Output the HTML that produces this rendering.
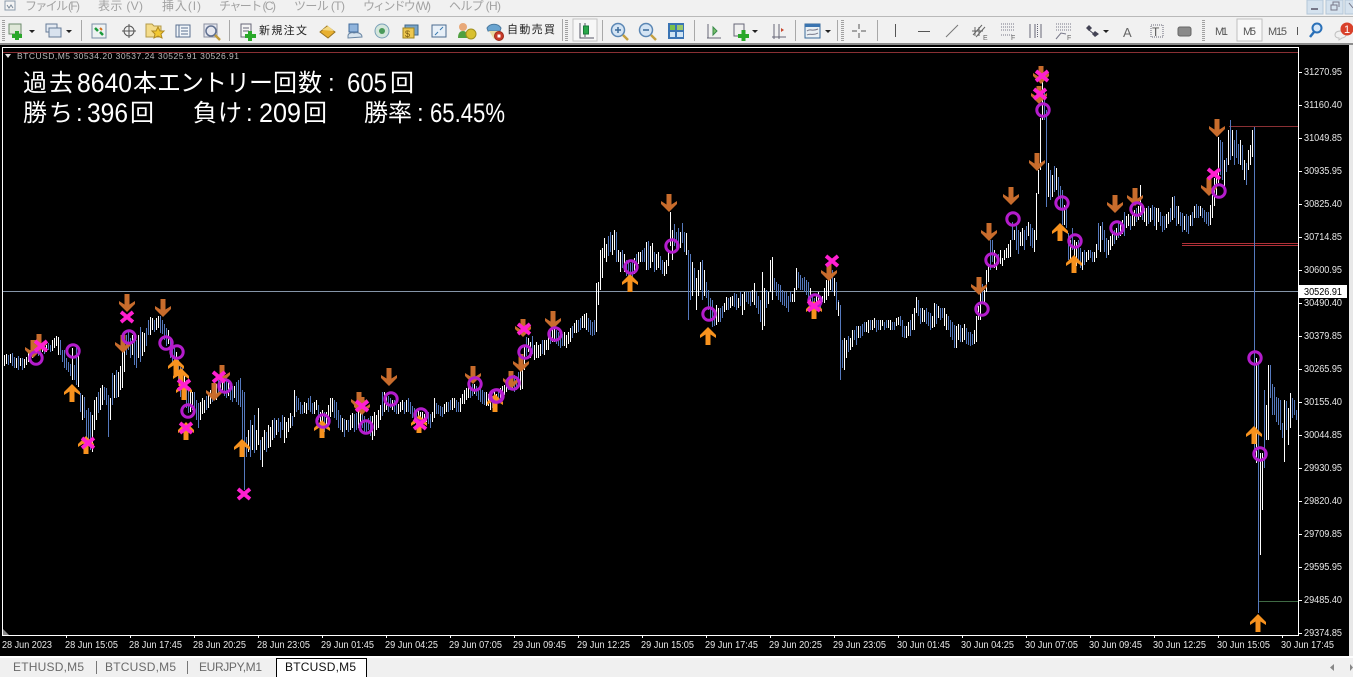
<!DOCTYPE html>
<html lang="ja"><head><meta charset="utf-8"><title>BTCUSD,M5</title>
<style>
html,body{margin:0;padding:0;background:#000;width:1353px;height:677px;overflow:hidden}
svg{display:block}
text{font-family:"Liberation Sans","Noto Sans CJK JP",sans-serif}
.m{font-size:12px;fill:#a2a2a2}
.t{font-size:11px;fill:#222}
.y{font-size:10px;fill:#e8e8e8}
.x{font-size:10px;fill:#e8e8e8}
.big{font-size:24px;fill:#fff}
.dg{font-size:27px;fill:#fff}
.tab{font-size:12px;fill:#6a6a6a}
.w{stroke:#fff;fill:none}
.b{stroke:#5579bd;fill:none}
.dn{fill:#c86c2c}.up{fill:#f7921e}
.xx{stroke:#ff1fd0;stroke-width:3.800;fill:none}
.ci{stroke:#b41ccc;stroke-width:3;fill:none}
</style></head><body>
<svg width="1353" height="677" viewBox="0 0 1353 677" xmlns="http://www.w3.org/2000/svg">
<defs>
<path id="d" d="M-2.500-9H2.500V1.500L8-2V1L0 9-8 1V-2L-2.500 1.500Z"/>
<path id="u" d="M-2.500 9H2.500V-1.500L8 2V-1L0-9-8-1V2L-2.500-1.500Z"/>
<path id="k" d="M-6-5L6 5M6-5L-6 5"/>
<circle id="o" r="6.200"/>
</defs>
<rect width="1353" height="677" fill="#000"/>
<!-- top bars -->
<rect width="1353" height="44" fill="#f1f1f1"/>
<rect y="16" width="1353" height="1" fill="#b9b9b9"/>
<rect y="43" width="1353" height="2" fill="#8c8c8c"/>
<path d="M5 1H15V10H5Z" fill="#f4f4f4" stroke="#8a9aaa"/><path d="M7 5l2 3 2-3 2 3" fill="none" stroke="#7a8a9a"/>
<text class="m" x="25" y="10" textLength="55">ファイル (F)</text>
<text class="m" x="98" y="10" textLength="45">表示 (V)</text>
<text class="m" x="162" y="10" textLength="39">挿入(I)</text>
<text class="m" x="219" y="10" textLength="57">チャート (C)</text>
<text class="m" x="294" y="10" textLength="51">ツール (T)</text>
<text class="m" x="363" y="10" textLength="68">ウィンドウ (W)</text>
<text class="m" x="449" y="10" textLength="52">ヘルプ (H)</text>
<!-- window buttons -->
<rect x="1307" y="0" width="16" height="14" fill="#d5e2ee" stroke="#b4c6d8"/><rect x="1326" y="0" width="17" height="14" fill="#d5e2ee" stroke="#b4c6d8"/><rect x="1345" y="0" width="9" height="14" fill="#d5e2ee" stroke="#b4c6d8"/>
<path d="M1311 9h7" stroke="#778" stroke-width="2"/><path d="M1331 5h6v5h-6zM1333 5V2h6v5" fill="none" stroke="#778"/><path d="M1349 3l4 5" stroke="#778"/>
<!-- separators / grips -->
<path d="M81.500 20V41M229.500 20V41M562.500 19V41M602.500 20V41M694.500 20V41M795.500 20V41M837.500 20V41M877.500 20V41" stroke="#a8a8a8"/>
<path d="M3.500 20V41M566.500 20V41M842.500 20V41M1203.500 20V41" stroke="#a0a0a0" stroke-dasharray="1 1" stroke-width="3"/>
<!-- icons row -->
<rect x="9" y="24" width="12" height="10" fill="#dfe8d8" stroke="#6c8a6c"/><path d="M12 36h10M17 31v9" stroke="#2aa82a" stroke-width="4"/>
<rect x="46" y="24" width="11" height="8" fill="#e4eaf2" stroke="#667c98"/><rect x="49" y="28" width="12" height="9" fill="#d8e2ee" stroke="#667c98"/>
<path d="M29 30h6l-3 3zM66 30h6l-3 3z" fill="#222"/>
<rect x="92" y="24" width="14" height="14" fill="#eef2f2" stroke="#7a8fa5"/><path d="M95 28l3 3M100 32l3 3" stroke="#1a9a3a" stroke-width="2.500"/><path d="M100 28l2 2" stroke="#d27020" stroke-width="2"/>
<circle cx="129" cy="31" r="5" fill="none" stroke="#555"/><path d="M122 31h14M129 24v14" stroke="#555"/>
<path d="M146 24h6l2 2h7v11h-15z" fill="#f4dc8a" stroke="#b49a4a"/><path d="M158 27l2 4 4 0-3 3 1 4-4-2-4 2 1-4-3-3 4 0z" fill="#f2c830" stroke="#b08a20"/>
<rect x="176" y="25" width="14" height="12" fill="#f2f6fa" stroke="#5a7090"/><path d="M179 25v12M181 28h7M181 31h7M181 34h7" stroke="#5a7090"/>
<rect x="204" y="24" width="13" height="13" fill="#e6e8f0" stroke="#8a90a0"/><circle cx="211" cy="31" r="5" fill="none" stroke="#607090" stroke-width="1.500"/><path d="M215 35l5 5" stroke="#c09a3a" stroke-width="2.500"/>
<rect x="241" y="24" width="10" height="13" fill="#f4f4f4" stroke="#667"/><path d="M243 28h6M243 31h6" stroke="#667"/><path d="M245 36h11M250 31v10" stroke="#2aa82a" stroke-width="4"/>
<text class="t" x="259" y="34" textLength="48">新規注文</text>
<path d="M320 32l7-6 8 6-7 6z" fill="#e8b030" stroke="#9a7420"/><path d="M322 30l6-4 6 5" fill="#f4d880"/>
<path d="M349 24h9v8h-9z" fill="#90b4dc" stroke="#406a9c"/><path d="M348 36c0-3 4-4 6-3 3-1 8 0 8 4l-14 1z" fill="#d8e4ee" stroke="#6a86a4"/>
<circle cx="382" cy="31" r="7" fill="#d4e6dc" stroke="#7aa0b8"/><circle cx="382" cy="31" r="3" fill="#4a9a5a"/>
<rect x="405" y="25" width="13" height="10" fill="#78a4c8" stroke="#40688c"/><rect x="403" y="28" width="11" height="10" fill="#eec850" stroke="#a08420"/><text x="405" y="37" font-size="9" fill="#7a5a10">$</text>
<rect x="432" y="25" width="14" height="12" fill="#e8f0f8" stroke="#4a6a90"/><path d="M435 35l3-3M443 27l-3 3" stroke="#3a7ab0"/>
<circle cx="463" cy="27" r="4" fill="#e8a878"/><path d="M458 38c0-5 2-7 5-7s4 2 4 7z" fill="#50a040"/><circle cx="471" cy="34" r="5" fill="#d8c030" stroke="#a09020"/>
<path d="M487 28c3-5 11-5 14 0l-1 3-12 0z" fill="#6aa4d0" stroke="#4a7aa0"/><path d="M489 31l5 8 5-4 0-4z" fill="#e8d8a0"/><circle cx="499" cy="36" r="4.500" fill="#c83a28" stroke="#9a2a1a"/><rect x="497.500" y="34.500" width="3" height="3" fill="#fff"/>
<text class="t" x="507" y="33" textLength="48">自動売買</text>
<rect x="573" y="19" width="24" height="22" fill="#f7f7f7" stroke="#c4c4c4"/><path d="M580 23v15h14M585 23v14" stroke="#556" fill="none"/><rect x="583.500" y="26" width="5" height="8" fill="#2aa84a" stroke="#1a7a3a"/>
<circle cx="618" cy="30" r="6.500" fill="#d4e4f4" stroke="#5a86b4" stroke-width="1.500"/><path d="M615 30h6M618 27v6" stroke="#3a6a9a" stroke-width="1.500"/><path d="M623 35l5 5" stroke="#c4a040" stroke-width="2.500"/>
<circle cx="646" cy="30" r="6.500" fill="#d4e4f4" stroke="#5a86b4" stroke-width="1.500"/><path d="M643 30h6" stroke="#3a6a9a" stroke-width="1.500"/><path d="M651 35l5 5" stroke="#c4a040" stroke-width="2.500"/>
<rect x="668" y="23" width="16" height="16" fill="#3a74b4"/><rect x="670" y="25" width="5" height="5" fill="#7ac04a"/><rect x="677" y="25" width="6" height="5" fill="#9ac86a"/><rect x="670" y="32" width="5" height="5" fill="#cfe4f4"/><rect x="677" y="32" width="6" height="5" fill="#cfe4f4"/>
<path d="M708 24v14h11M707 38h14" stroke="#667" fill="none"/><path d="M713 27l4 4-4 4z" fill="#7ac06a" stroke="#3a8a4a"/>
<rect x="734" y="24" width="10" height="12" fill="#f0f0f0" stroke="#667"/><path d="M738 36h11M743.500 30v11" stroke="#2aa82a" stroke-width="4"/><path d="M752 30h6l-3 3z" fill="#222"/>
<path d="M774 24v15M779 24v15M772 37h14" stroke="#667" fill="none"/><path d="M781 28l3 2-3 2z" fill="#c84a30"/>
<rect x="805" y="24" width="15" height="14" fill="#eaf0f4" stroke="#3a6a9a"/><rect x="805" y="24" width="15" height="3" fill="#3a74b0"/><path d="M807 31c3-3 5 1 11-2M807 35c3-2 6 1 11-2" stroke="#778" fill="none"/><path d="M825 30h6l-3 3z" fill="#222"/>
<path d="M852 31h5M861 31h5M859 24v5M859 33v5" stroke="#555"/>
<path d="M895.500 24v13M918 31.500h12" stroke="#555"/><path d="M946 37l12-12" stroke="#777"/>
<path d="M973 35l9-10M976 37l9-10M972 31h11M975 27v9M979 27v9" stroke="#666"/><text x="983" y="40" font-size="7" fill="#666">E</text>
<path d="M1001 24h13M1001 27h13M1001 30h13M1001 35h11" stroke="#778" stroke-dasharray="1 1"/><text x="1011" y="40" font-size="7" fill="#666">F</text>
<path d="M1030 24v14M1035 24v14M1041 24v14" stroke="#667"/><path d="M1037.500 24v14" stroke="#667" stroke-dasharray="1 1"/>
<path d="M1056 24h15M1056 27h15M1056 30h15" stroke="#778" stroke-dasharray="1 1"/><path d="M1056 39l5-6 5 1" stroke="#778" fill="none"/><text x="1067" y="40" font-size="7" fill="#666">F</text>
<path d="M1086 28l3-3 3 3-3 3zM1092 34l3-3 4 3-4 3z" fill="#445"/><path d="M1089 30l5 4" stroke="#445"/><path d="M1103 30h6l-3 3z" fill="#222"/>
<text x="1123" y="37" font-size="13" fill="#666">A</text>
<rect x="1151" y="25" width="12" height="12" fill="none" stroke="#667" stroke-dasharray="1 1"/><text x="1152" y="36" font-size="12" fill="#555">T</text>
<rect x="1178" y="27" width="13" height="9" rx="2" fill="#8a8a8a" stroke="#666"/>
<rect x="1237" y="19" width="25" height="22" fill="#f8f8f8" stroke="#c0c0c0"/>
<text class="t" x="1215" y="35" textLength="13" style="fill:#555">M1</text>
<text class="t" x="1243" y="35" textLength="13" style="fill:#555">M5</text>
<text class="t" x="1268" y="35" textLength="19" style="fill:#555">M15</text>
<path d="M1297.500 27v8" stroke="#555"/>
<circle cx="1317" cy="28" r="4.500" fill="#d8e8f8" stroke="#2a70b8" stroke-width="2"/><path d="M1314 32l-4 5" stroke="#2a70b8" stroke-width="2.500"/>
<path d="M1335 35c0-3 3-4 6-4s5 2 5 4-3 3-4 3l-3 2v-2c-2 0-4-1-4-3z" fill="#f0f0f0" stroke="#c0c0c0"/>
<circle cx="1347" cy="29" r="6.500" fill="#d8402a"/><text x="1344" y="33" font-size="11" fill="#fff">1</text>

<!-- chart frame -->
<path d="M2.500 47.500H1298.500V635.500H2.500Z" fill="none" stroke="#fff"/>
<path d="M3 52.500H1298" stroke="#8a3034"/>
<path d="M3 629v6h6z" fill="#888"/>
<path d="M5 54h6l-3 4z" fill="#ddd"/>
<text x="17" y="59" font-size="8.500" fill="#bbb" textLength="222">BTCUSD,M5  30534.20 30537.24 30525.91 30526.91</text>
<!-- level lines -->
<rect x="3" y="291" width="1295" height="1" fill="#8595a8"/>
<rect x="1229" y="126" width="69" height="1" fill="#8a3034"/>
<rect x="1182" y="243" width="116" height="1" fill="#b03038"/>
<rect x="1182" y="245" width="116" height="1" fill="#b03038"/>
<rect x="1259" y="601" width="39" height="1" fill="#3f6a44"/>
<!-- bars -->
<g transform="translate(.5 0)" stroke-width="1">
<path class="w" d="M2 353V370M4 355V366M6 354V364"/><path class="b" d="M8 355V365"/><path class="w" d="M10 354V363"/><path class="b" d="M12 353V366M14 357V368"/><path class="w" d="M16 358V368"/><path class="b" d="M18 356V370"/><path class="w" d="M20 358V366"/><path class="b" d="M22 358V370"/><path class="w" d="M24 359V368M26 357V365M28 352V362"/><path class="b" d="M30 350V360"/><path class="w" d="M32 345V358"/><path class="b" d="M34 343V355"/><path class="w" d="M36 345V352"/><path class="b" d="M38 346V356M40 348V354"/><path class="w" d="M42 346V352"/><path class="b" d="M44 344V354"/><path class="w" d="M46 345V352"/><path class="b" d="M48 343V350M50 345V352"/><path class="w" d="M52 340V351M54 338V348M56 336V346M58 337V355"/><path class="b" d="M60 340V355M62 350V362M64 350V368M66 358V370M68 362V372M70 364V376"/><path class="w" d="M72 348V380"/><path class="b" d="M74 365V380M76 346V385"/><path class="w" d="M78 347V387"/><path class="b" d="M80 393V412"/><path class="w" d="M82 395V420"/><path class="b" d="M84 397V418M86 410V437M88 408V440M90 412V450"/><path class="w" d="M92 415V452M94 400V430M96 397V420"/><path class="b" d="M98 392V413"/><path class="w" d="M100 388V410M102 385V405"/><path class="b" d="M104 387V400M106 388V405M108 395V437"/><path class="w" d="M110 398V420"/><path class="b" d="M112 373V405"/><path class="w" d="M114 375V398"/><path class="b" d="M116 370V398"/><path class="w" d="M118 372V397M120 366V390M122 352V388M124 345V372"/><path class="b" d="M126 335V355M128 332V350M130 338V358"/><path class="w" d="M132 335V355"/><path class="b" d="M134 340V365M136 340V368"/><path class="w" d="M138 335V358"/><path class="b" d="M140 327V362"/><path class="w" d="M142 332V356M144 333V352"/><path class="b" d="M146 328V346M148 320V335"/><path class="w" d="M150 317V335M152 318V330"/><path class="b" d="M154 320V332"/><path class="w" d="M156 318V330M158 316V328"/><path class="b" d="M160 316V333M162 320V334M164 324V340M166 328V346"/><path class="w" d="M168 330V344"/><path class="b" d="M170 340V358M172 344V365M174 348V370"/><path class="w" d="M176 352V368"/><path class="b" d="M178 360V382M180 367V397M182 368V392"/><path class="w" d="M184 372V390"/><path class="b" d="M186 380V408M188 388V413"/><path class="w" d="M190 390V412M192 392V410"/><path class="b" d="M194 392V414M196 400V420M198 403V428"/><path class="w" d="M200 402V420M202 398V414M204 400V413"/><path class="b" d="M206 396V410"/><path class="w" d="M208 392V408M210 390V404"/><path class="b" d="M212 392V402"/><path class="w" d="M214 388V400M216 384V400"/><path class="b" d="M218 380V396"/><path class="w" d="M220 378V394M222 376V392"/><path class="b" d="M224 378V396M226 380V398"/><path class="w" d="M228 382V396"/><path class="b" d="M230 382V400M232 386V402"/><path class="w" d="M234 386V398"/><path class="b" d="M236 382V402M238 380V405M240 378V407M242 390V440M244 392V490"/><path class="b" d="M246 437V457"/><path class="w" d="M248 430V452"/><path class="b" d="M250 420V457"/><path class="w" d="M252 425V450"/><path class="b" d="M254 415V453"/><path class="w" d="M256 430V450M258 408V445"/><path class="b" d="M260 440V460"/><path class="w" d="M262 437V467M264 430V450"/><path class="b" d="M266 432V452"/><path class="w" d="M268 425V448M270 427V447M272 420V440"/><path class="b" d="M274 418V438"/><path class="w" d="M276 420V435"/><path class="b" d="M278 418V432M280 422V438M282 415V430"/><path class="w" d="M284 417V443M286 422V438M288 418V432M290 413V428"/><path class="b" d="M292 416V426"/><path class="w" d="M294 390V417"/><path class="b" d="M296 396V412M298 398V410M300 402V414M302 405V414"/><path class="w" d="M304 402V413M306 403V414"/><path class="b" d="M308 398V410M310 396V412M312 403V414"/><path class="w" d="M314 402V414M316 400V410"/><path class="b" d="M318 405V420"/><path class="w" d="M320 412V425"/><path class="w" d="M322 410V430"/><path class="b" d="M324 412V432"/><path class="w" d="M326 412V425M328 405V418"/><path class="w" d="M330 398V417M332 398V412"/><path class="b" d="M334 400V418M336 402V420M338 410V428M340 415V430"/><path class="w" d="M342 418V432"/><path class="b" d="M344 419V437"/><path class="w" d="M346 420V430"/><path class="b" d="M348 420V432"/><path class="w" d="M350 415V430M352 413V428"/><path class="b" d="M354 414V432M356 413V430"/><path class="w" d="M358 410V428M360 412V424"/><path class="b" d="M362 414V428M364 416V432M366 420V434M368 418V430"/><path class="b" d="M370 416V436"/><path class="w" d="M372 416V440M374 412V436M376 415V430M378 410V428"/><path class="w" d="M380 405V420"/><path class="b" d="M382 392V416"/><path class="w" d="M384 392V412M386 396V410"/><path class="b" d="M388 396V412M390 398V408"/><path class="w" d="M392 400V410"/><path class="b" d="M394 400V412M396 402V414"/><path class="w" d="M398 404V414M400 402V412M402 400V410"/><path class="b" d="M404 402V414"/><path class="w" d="M406 400V412"/><path class="b" d="M408 398V412M410 402V414M412 406V418M414 408V424"/><path class="b" d="M416 412V426"/><path class="w" d="M418 410V426M420 412V428M422 412V426"/><path class="w" d="M424 414V424M426 412V422"/><path class="b" d="M428 412V424M430 414V428"/><path class="w" d="M432 412V422M434 398V418"/><path class="b" d="M436 403V414M438 405V414M440 406V416M442 407V417"/><path class="w" d="M444 404V414M446 402V412"/><path class="b" d="M448 402V412M450 400V410"/><path class="w" d="M452 398V410M454 398V408"/><path class="b" d="M456 400V412M458 402V412"/><path class="w" d="M460 398V412M462 394V404M464 390V404"/><path class="w" d="M466 388V400M468 385V398"/><path class="b" d="M470 386V398M472 384V396"/><path class="w" d="M474 384V394"/><path class="b" d="M476 386V396M478 388V400M480 388V402"/><path class="b" d="M482 390V404M484 392V405"/><path class="w" d="M486 392V406M488 394V406M490 394V410"/><path class="b" d="M492 396V408"/><path class="w" d="M494 390V402M496 394V404"/><path class="b" d="M498 392V402"/><path class="w" d="M500 388V398M502 386V396M504 385V395M506 382V392"/><path class="b" d="M508 378V390"/><path class="w" d="M510 375V388M512 372V388"/><path class="b" d="M514 375V392M516 378V390M518 372V388"/><path class="w" d="M520 370V390M522 368V389"/><path class="w" d="M524 345V370"/><path class="b" d="M526 337V356"/><path class="w" d="M528 338V352M530 342V358"/><path class="b" d="M532 336V354"/><path class="w" d="M534 345V360M536 342V358M538 345V358"/><path class="w" d="M540 344V356"/><path class="b" d="M542 340V354"/><path class="w" d="M544 340V355M546 340V350M548 336V350"/><path class="b" d="M550 328V344"/><path class="w" d="M552 328V342M554 328V342"/><path class="b" d="M556 330V344M558 332V346M560 336V348M562 334V346"/><path class="w" d="M564 332V346M566 335V348M568 332V344M570 328V342"/><path class="b" d="M572 326V338"/><path class="w" d="M574 323V333M576 320V333"/><path class="b" d="M578 320V332M580 318V330"/><path class="w" d="M582 316V328M584 314V328M586 313V330"/><path class="b" d="M588 318V332M590 320V335M592 322V336M594 320V335"/><path class="w" d="M596 283V332M598 282V305M600 250V290M602 248V278M604 238V258"/><path class="w" d="M606 244V262"/><path class="b" d="M608 236V256M610 232V252"/><path class="w" d="M612 235V255M614 230V250"/><path class="b" d="M616 232V262"/><path class="w" d="M618 250V262M620 252V272"/><path class="b" d="M622 250V268"/><path class="w" d="M624 254V272"/><path class="b" d="M626 260V276M628 262V278M630 263V277M632 262V278"/><path class="w" d="M634 258V274"/><path class="b" d="M636 254V268"/><path class="w" d="M638 252V264M640 252V262"/><path class="b" d="M642 250V262M644 248V262"/><path class="w" d="M646 242V270"/><path class="b" d="M648 241V270"/><path class="w" d="M650 246V268M652 243V262"/><path class="b" d="M654 252V272"/><path class="w" d="M656 254V270M658 252V268"/><path class="b" d="M660 256V270M662 260V274"/><path class="w" d="M664 262V276M666 260V274M668 250V266M670 212V246"/><path class="w" d="M672 230V260"/><path class="b" d="M674 224V246M676 232V248M678 228V245"/><path class="w" d="M680 232V248"/><path class="b" d="M682 223V243M684 232V252"/><path class="w" d="M686 233V255"/><path class="b" d="M688 250V320M690 254V300"/><path class="w" d="M692 262V296"/><path class="b" d="M694 268V290"/><path class="w" d="M696 278V310M698 270V296M700 262V290"/><path class="b" d="M702 260V300"/><path class="w" d="M704 270V296"/><path class="b" d="M706 282V298M708 290V310M710 298V320M712 300V327"/><path class="b" d="M714 312V326"/><path class="w" d="M716 305V325M718 308V322"/><path class="b" d="M720 308V322M722 306V318"/><path class="w" d="M724 303V312M726 297V310"/><path class="b" d="M728 298V310"/><path class="w" d="M730 297V308"/><path class="w" d="M732 296V306"/><path class="b" d="M734 293V307M736 294V310"/><path class="w" d="M738 298V308"/><path class="b" d="M740 292V306"/><path class="w" d="M742 294V315M744 292V310"/><path class="b" d="M746 292V302M748 292V304M750 292V306"/><path class="w" d="M752 290V302M754 283V305"/><path class="b" d="M756 292V308M758 296V314M760 300V322"/><path class="w" d="M762 272V330M764 288V326"/><path class="b" d="M766 290V308"/><path class="w" d="M768 292V304M770 260V292"/><path class="w" d="M772 257V300"/><path class="b" d="M774 278V290M776 282V296M778 284V300M780 285V302"/><path class="b" d="M782 290V305M784 292V306M786 292V308M788 296V312M790 292V302"/><path class="w" d="M792 294V302M794 288V302"/><path class="w" d="M796 268V290"/><path class="b" d="M798 272V288M800 275V290M802 278V290M804 277V292M806 280V295M808 282V298"/><path class="w" d="M810 288V304"/><path class="b" d="M812 296V308M814 298V312"/><path class="w" d="M816 296V310M818 292V306"/><path class="b" d="M820 296V308"/><path class="w" d="M822 296V302M824 288V303M826 280V300"/><path class="w" d="M828 272V296M830 265V290"/><path class="b" d="M832 270V292"/><path class="w" d="M834 278V296"/><path class="b" d="M836 282V310M838 300V315"/><path class="w" d="M838 302V316"/><path class="b" d="M840 305V380M842 340V368"/><path class="w" d="M844 338V370M846 340V358"/><path class="b" d="M848 336V352"/><path class="w" d="M850 338V350M852 330V347"/><path class="b" d="M854 330V340M856 326V345"/><path class="w" d="M858 326V338"/><path class="b" d="M860 326V338M862 324V336M864 322V332"/><path class="w" d="M866 322V332M868 320V333"/><path class="b" d="M870 320V330"/><path class="w" d="M872 320V330M874 318V328"/><path class="b" d="M876 320V332M878 320V330"/><path class="w" d="M880 320V330M882 320V326"/><path class="b" d="M884 322V330M886 320V328"/><path class="w" d="M888 320V328M890 320V330"/><path class="b" d="M892 322V330M894 322V330"/><path class="w" d="M896 318V326M898 317V325"/><path class="b" d="M900 316V326M902 320V337"/><path class="b" d="M904 326V338"/><path class="w" d="M906 326V338M908 322V336"/><path class="b" d="M910 320V336"/><path class="w" d="M912 314V330M914 308V330"/><path class="w" d="M916 297V313"/><path class="b" d="M918 300V316M920 308V324"/><path class="w" d="M922 308V322M924 310V322"/><path class="b" d="M926 308V324M928 312V326"/><path class="b" d="M930 313V330"/><path class="w" d="M932 316V328M934 303V327"/><path class="b" d="M936 304V324"/><path class="w" d="M938 306V318"/><path class="b" d="M940 308V320M942 308V318"/><path class="w" d="M944 308V326M946 314V330"/><path class="b" d="M948 316V330M950 320V337M952 322V340M954 325V348"/><path class="w" d="M956 326V348M958 324V340"/><path class="b" d="M960 325V342"/><path class="w" d="M962 328V342M964 324V340"/><path class="b" d="M966 328V344M968 332V345M970 332V346M972 334V345"/><path class="w" d="M974 330V344M976 316V342M978 306V320"/><path class="w" d="M980 293V320"/><path class="b" d="M982 284V304"/><path class="w" d="M984 290V304M986 270V292M988 266V282"/><path class="b" d="M990 240V270M992 240V262"/><path class="w" d="M994 250V268M996 262V270"/><path class="b" d="M998 254V264"/><path class="w" d="M1000 250V264M1002 258V266"/><path class="w" d="M1004 250V260M1006 248V258M1008 244V258"/><path class="w" d="M1010 240V257"/><path class="b" d="M1012 222V240"/><path class="w" d="M1014 230V240"/><path class="b" d="M1016 226V250M1018 230V254"/><path class="w" d="M1020 232V246M1022 228V246"/><path class="b" d="M1024 230V250M1026 226V240"/><path class="w" d="M1028 222V236"/><path class="b" d="M1030 224V246M1032 228V248"/><path class="w" d="M1034 230V252M1036 193V240"/><path class="w" d="M1038 170V194M1040 118V170M1042 78V120"/><path class="b" d="M1044 88V120M1046 110V207"/><path class="w" d="M1048 163V197"/><path class="b" d="M1050 170V200"/><path class="w" d="M1052 175V197"/><path class="b" d="M1054 166V192"/><path class="w" d="M1056 168V190"/><path class="b" d="M1058 177V197M1060 186V210M1062 190V225"/><path class="w" d="M1064 205V225"/><path class="b" d="M1066 206V228M1068 233V260"/><path class="w" d="M1070 240V262"/><path class="b" d="M1072 228V250"/><path class="w" d="M1074 240V264M1076 242V266"/><path class="b" d="M1078 240V260M1080 248V268"/><path class="w" d="M1082 252V270"/><path class="b" d="M1084 250V265"/><path class="w" d="M1086 252V262M1088 250V260"/><path class="b" d="M1090 250V258M1092 252V262"/><path class="w" d="M1094 252V262M1096 244V258"/><path class="b" d="M1098 223V250"/><path class="w" d="M1100 226V252"/><path class="b" d="M1102 222V240M1104 230V252M1106 238V258"/><path class="w" d="M1108 240V255M1110 236V250M1112 232V246"/><path class="b" d="M1114 230V244"/><path class="w" d="M1116 228V240"/><path class="b" d="M1118 222V238"/><path class="w" d="M1120 224V236M1122 220V234"/><path class="b" d="M1124 212V236"/><path class="w" d="M1126 216V228M1128 214V226"/><path class="b" d="M1130 216V230"/><path class="w" d="M1132 215V226M1134 210V226"/><path class="b" d="M1136 208V222"/><path class="w" d="M1138 206V220M1140 185V217"/><path class="b" d="M1142 205V220"/><path class="w" d="M1144 208V222M1146 208V226"/><path class="b" d="M1148 206V224"/><path class="w" d="M1150 208V222"/><path class="b" d="M1152 205V220M1154 207V226"/><path class="w" d="M1156 208V230M1158 208V222"/><path class="b" d="M1160 212V226M1162 216V232M1164 216V230"/><path class="w" d="M1166 214V228M1168 212V224"/><path class="b" d="M1170 208V222"/><path class="w" d="M1172 197V220"/><path class="b" d="M1174 196V218M1176 206V226"/><path class="w" d="M1178 206V224"/><path class="b" d="M1180 212V226M1182 213V232"/><path class="w" d="M1184 216V230"/><path class="b" d="M1186 214V232M1188 216V234"/><path class="w" d="M1190 215V226"/><path class="b" d="M1192 212V226"/><path class="w" d="M1194 206V218"/><path class="b" d="M1196 204V218M1198 206V218"/><path class="w" d="M1200 206V216"/><path class="b" d="M1202 208V218M1204 210V222M1206 212V224M1208 212V226"/><path class="w" d="M1210 205V225M1212 195V218M1214 178V206M1216 170V195"/><path class="w" d="M1218 137V183"/><path class="b" d="M1220 140V175M1222 142V180"/><path class="w" d="M1224 160V190"/><path class="b" d="M1226 158V172"/><path class="w" d="M1228 130V165"/><path class="b" d="M1230 120V160"/><path class="w" d="M1232 130V156"/><path class="b" d="M1234 140V165M1236 130V158M1238 144V164"/><path class="w" d="M1240 140V165"/><path class="b" d="M1242 145V170"/><path class="w" d="M1244 160V180"/><path class="b" d="M1246 163V185"/><path class="w" d="M1248 150V170M1250 145V165"/><path class="w" d="M1252 130V157"/><path class="b" d="M1254 127V450"/><path class="w" d="M1256 358V463"/><path class="b" d="M1258 362V613"/><path class="w" d="M1260 453V555M1262 453V510"/><path class="b" d="M1264 390V468"/><path class="w" d="M1266 405V440M1268 365V440"/><path class="b" d="M1270 365V398M1272 384V415M1274 387V415M1276 397V422M1278 398V425M1280 400V430M1282 423V438"/><path class="w" d="M1284 400V462"/><path class="b" d="M1286 401V430"/><path class="w" d="M1288 408V445M1290 393V428"/><path class="b" d="M1292 398V418M1294 400V415M1296 410V420"/>
</g>
<!-- down arrows -->
<g class="dn">
<use href="#d" x="33" y="349"/><use href="#d" x="39" y="343"/><use href="#d" x="127" y="303"/><use href="#d" x="163" y="308"/><use href="#d" x="123" y="344"/><use href="#d" x="222" y="374"/><use href="#d" x="214" y="392"/>
<use href="#d" x="359" y="401"/><use href="#d" x="362" y="406"/><use href="#d" x="389" y="377"/><use href="#d" x="473" y="375"/><use href="#d" x="511" y="380"/><use href="#d" x="521" y="363"/><use href="#d" x="523" y="328"/><use href="#d" x="553" y="320"/>
<use href="#d" x="669" y="203"/><use href="#d" x="829" y="272"/>
<use href="#d" x="979" y="286"/><use href="#d" x="989" y="232"/><use href="#d" x="1011" y="196"/><use href="#d" x="1037" y="162"/><use href="#d" x="1041" y="75"/><use href="#d" x="1039" y="95"/><use href="#d" x="1115" y="204"/><use href="#d" x="1135" y="197"/><use href="#d" x="1217" y="128"/><use href="#d" x="1209" y="187"/>
</g>
<!-- up arrows -->
<g class="up">
<use href="#u" x="72" y="393"/><use href="#u" x="86" y="445"/><use href="#u" x="176" y="367"/><use href="#u" x="181" y="377"/><use href="#u" x="184" y="391"/><use href="#u" x="186" y="431"/><use href="#u" x="242" y="448"/>
<use href="#u" x="322" y="429"/><use href="#u" x="419" y="424"/><use href="#u" x="495" y="403"/>
<use href="#u" x="630" y="283"/><use href="#u" x="708" y="336"/><use href="#u" x="814" y="310"/>
<use href="#u" x="1060" y="232"/><use href="#u" x="1074" y="264"/><use href="#u" x="1254" y="435"/><use href="#u" x="1258" y="623"/>
</g>
<!-- circles -->
<g class="ci">
<use href="#o" x="36" y="358"/><use href="#o" x="73" y="351"/><use href="#o" x="129" y="337"/><use href="#o" x="166" y="343"/><use href="#o" x="177" y="352"/><use href="#o" x="188" y="411"/><use href="#o" x="225" y="386"/>
<use href="#o" x="323" y="421"/><use href="#o" x="366" y="427"/><use href="#o" x="391" y="399"/><use href="#o" x="421" y="415"/><use href="#o" x="475" y="384"/><use href="#o" x="496" y="396"/><use href="#o" x="497" y="396"/><use href="#o" x="513" y="383"/><use href="#o" x="525" y="352"/><use href="#o" x="555" y="334"/>
<use href="#o" x="631" y="267"/><use href="#o" x="672" y="246"/><use href="#o" x="709" y="314"/><use href="#o" x="815" y="301"/>
<use href="#o" x="982" y="309"/><use href="#o" x="992" y="260"/><use href="#o" x="1013" y="219"/><use href="#o" x="1043" y="110"/><use href="#o" x="1062" y="203"/><use href="#o" x="1075" y="241"/><use href="#o" x="1117" y="228"/><use href="#o" x="1137" y="209"/><use href="#o" x="1219" y="191"/><use href="#o" x="1255" y="358"/><use href="#o" x="1260" y="454"/>
</g>
<!-- crosses -->
<g class="xx">
<use href="#k" x="41" y="346"/><use href="#k" x="127" y="317"/><use href="#k" x="88" y="443"/><use href="#k" x="184" y="385"/><use href="#k" x="186" y="428"/><use href="#k" x="219" y="377"/><use href="#k" x="244" y="494"/>
<use href="#k" x="362" y="406"/><use href="#k" x="420" y="424"/><use href="#k" x="524" y="329"/><use href="#k" x="832" y="261"/><use href="#k" x="814" y="306"/><use href="#k" x="1042" y="76"/><use href="#k" x="1040" y="94"/><use href="#k" x="1214" y="174"/>
</g>
<!-- title -->
<text class="big" x="23 49" y="91">過去</text>
<text class="dg" x="77" y="92" textLength="55" lengthAdjust="spacingAndGlyphs">8640</text>
<text class="big" x="133 157 180 203 226 249 273 298 328" y="91">本エントリー回数:</text>
<text class="dg" x="347" y="92" textLength="40" lengthAdjust="spacingAndGlyphs">605</text>
<text class="big" x="390" y="91">回</text>
<text class="big" x="23 49 76" y="121">勝ち:</text>
<text class="dg" x="87" y="122" textLength="41" lengthAdjust="spacingAndGlyphs">396</text>
<text class="big" x="130" y="121">回</text>
<text class="big" x="193 218 246" y="121">負け:</text>
<text class="dg" x="259" y="122" textLength="42" lengthAdjust="spacingAndGlyphs">209</text>
<text class="big" x="303" y="121">回</text>
<text class="big" x="364 388 417" y="121">勝率:</text>
<text class="dg" x="430" y="122" textLength="75" lengthAdjust="spacingAndGlyphs">65.45%</text>
<!-- y axis -->
<path d="M1298 72.500h4M1298 105.500h4M1298 138.500h4M1298 171.500h4M1298 204.500h4M1298 237.500h4M1298 270.500h4M1298 303.500h4M1298 336.500h4M1298 369.500h4M1298 402.500h4M1298 435.500h4M1298 468.500h4M1298 501.500h4M1298 534.500h4M1298 567.500h4M1298 600.500h4M1298 633.500h4" stroke="#fff"/>
<g>
<text x="1304" y="75" class="y" textLength="38" lengthAdjust="spacingAndGlyphs">31270.95</text><text x="1304" y="108" class="y" textLength="38" lengthAdjust="spacingAndGlyphs">31160.40</text><text x="1304" y="141" class="y" textLength="38" lengthAdjust="spacingAndGlyphs">31049.85</text><text x="1304" y="174" class="y" textLength="38" lengthAdjust="spacingAndGlyphs">30935.95</text><text x="1304" y="207" class="y" textLength="38" lengthAdjust="spacingAndGlyphs">30825.40</text><text x="1304" y="240" class="y" textLength="38" lengthAdjust="spacingAndGlyphs">30714.85</text><text x="1304" y="273" class="y" textLength="38" lengthAdjust="spacingAndGlyphs">30600.95</text><text x="1304" y="306" class="y" textLength="38" lengthAdjust="spacingAndGlyphs">30490.40</text><text x="1304" y="339" class="y" textLength="38" lengthAdjust="spacingAndGlyphs">30379.85</text><text x="1304" y="372" class="y" textLength="38" lengthAdjust="spacingAndGlyphs">30265.95</text><text x="1304" y="405" class="y" textLength="38" lengthAdjust="spacingAndGlyphs">30155.40</text><text x="1304" y="438" class="y" textLength="38" lengthAdjust="spacingAndGlyphs">30044.85</text><text x="1304" y="471" class="y" textLength="38" lengthAdjust="spacingAndGlyphs">29930.95</text><text x="1304" y="504" class="y" textLength="38" lengthAdjust="spacingAndGlyphs">29820.40</text><text x="1304" y="537" class="y" textLength="38" lengthAdjust="spacingAndGlyphs">29709.85</text><text x="1304" y="570" class="y" textLength="38" lengthAdjust="spacingAndGlyphs">29595.95</text><text x="1304" y="603" class="y" textLength="38" lengthAdjust="spacingAndGlyphs">29485.40</text><text x="1304" y="636" class="y" textLength="38" lengthAdjust="spacingAndGlyphs">29374.85</text>
</g>
<rect x="1299" y="285" width="48" height="13" fill="#fff"/>
<text x="1304" y="295" font-size="10" fill="#000" textLength="38" lengthAdjust="spacingAndGlyphs">30526.91</text>
<!-- x axis -->
<path d="M66.500 635v3M130.500 635v3M194.500 635v3M258.500 635v3M322.500 635v3M386.500 635v3M450.500 635v3M514.500 635v3M578.500 635v3M642.500 635v3M706.500 635v3M770.500 635v3M834.500 635v3M898.500 635v3M962.500 635v3M1026.500 635v3M1090.500 635v3M1154.500 635v3M1218.500 635v3M1282.500 635v3" stroke="#fff"/>
<g>
<text class="x" x="2" y="648" textLength="50" lengthAdjust="spacingAndGlyphs">28 Jun 2023</text><text class="x" x="65" y="648" textLength="53" lengthAdjust="spacingAndGlyphs">28 Jun 15:05</text><text class="x" x="129" y="648" textLength="53" lengthAdjust="spacingAndGlyphs">28 Jun 17:45</text><text class="x" x="193" y="648" textLength="53" lengthAdjust="spacingAndGlyphs">28 Jun 20:25</text><text class="x" x="257" y="648" textLength="53" lengthAdjust="spacingAndGlyphs">28 Jun 23:05</text><text class="x" x="321" y="648" textLength="53" lengthAdjust="spacingAndGlyphs">29 Jun 01:45</text><text class="x" x="385" y="648" textLength="53" lengthAdjust="spacingAndGlyphs">29 Jun 04:25</text><text class="x" x="449" y="648" textLength="53" lengthAdjust="spacingAndGlyphs">29 Jun 07:05</text><text class="x" x="513" y="648" textLength="53" lengthAdjust="spacingAndGlyphs">29 Jun 09:45</text><text class="x" x="577" y="648" textLength="53" lengthAdjust="spacingAndGlyphs">29 Jun 12:25</text><text class="x" x="641" y="648" textLength="53" lengthAdjust="spacingAndGlyphs">29 Jun 15:05</text><text class="x" x="705" y="648" textLength="53" lengthAdjust="spacingAndGlyphs">29 Jun 17:45</text><text class="x" x="769" y="648" textLength="53" lengthAdjust="spacingAndGlyphs">29 Jun 20:25</text><text class="x" x="833" y="648" textLength="53" lengthAdjust="spacingAndGlyphs">29 Jun 23:05</text><text class="x" x="897" y="648" textLength="53" lengthAdjust="spacingAndGlyphs">30 Jun 01:45</text><text class="x" x="961" y="648" textLength="53" lengthAdjust="spacingAndGlyphs">30 Jun 04:25</text><text class="x" x="1025" y="648" textLength="53" lengthAdjust="spacingAndGlyphs">30 Jun 07:05</text><text class="x" x="1089" y="648" textLength="53" lengthAdjust="spacingAndGlyphs">30 Jun 09:45</text><text class="x" x="1153" y="648" textLength="53" lengthAdjust="spacingAndGlyphs">30 Jun 12:25</text><text class="x" x="1217" y="648" textLength="53" lengthAdjust="spacingAndGlyphs">30 Jun 15:05</text><text class="x" x="1281" y="648" textLength="53" lengthAdjust="spacingAndGlyphs">30 Jun 17:45</text>
</g>
<!-- right gutter -->
<rect x="1349" y="45" width="4" height="612" fill="#e8e8e8"/>
<!-- tab bar -->
<rect y="656" width="1353" height="2" fill="#fff"/>
<rect y="658" width="1353" height="19" fill="#f0f0f0"/>
<text class="tab" x="13" y="671" textLength="71">ETHUSD,M5</text>
<path d="M96.500 661v13M187.500 661v13" stroke="#777"/>
<text class="tab" x="105" y="671" textLength="71">BTCUSD,M5</text>
<text class="tab" x="199" y="671" textLength="63">EURJPY,M1</text>
<path d="M276.500 677V658.500H366.500V677" fill="#fff" stroke="#000"/>
<text class="tab" x="285" y="671" textLength="71" style="fill:#111">BTCUSD,M5</text>
<path d="M1334 664v7l-4-3.500zM1350 664v7l3-3.500z" fill="#888"/>
</svg>
</body></html>
